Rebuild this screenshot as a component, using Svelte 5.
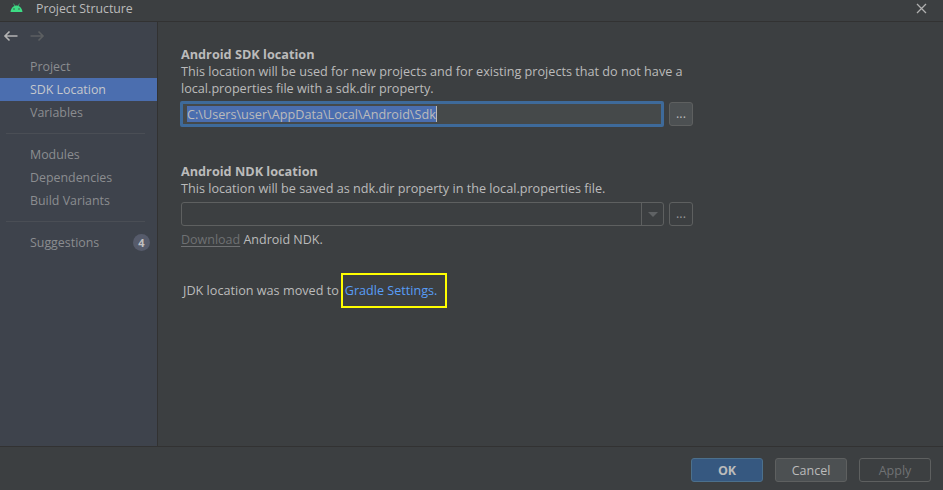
<script>
  const groups = [
    [{ t: 'Project' }, { t: 'SDK Location', on: true }, { t: 'Variables' }],
    [{ t: 'Modules' }, { t: 'Dependencies' }, { t: 'Build Variants' }],
    [{ t: 'Suggestions', badge: 4 }]
  ];
</script>

<div class="win">
  <header class="title">
    <svg class="droid" width="13" height="9" viewBox="0 0 13 9">
      <path fill="#3ddc84" d="M0.5 9C0.7 6 2.4 3.8 4.5 3L3.3 0.8 3.8 0.5 5 2.7C6 2.3 7 2.3 8 2.7L9.2 0.5 9.7 0.8 8.5 3C10.600 3.8 12.3 6 12.500 9Z"/>
      <circle cx="4" cy="6" r=".7" fill="#3c3f41"/><circle cx="9" cy="6" r=".7" fill="#3c3f41"/>
    </svg>
    <span>Project Structure</span>
    <svg class="close" width="11" height="11" viewBox="0 0 11 11"><path d="M1 1L10 10M10 1L1 10" stroke="#b0b0b0" stroke-width="1.3"/></svg>
  </header>

  <div class="body">
    <aside class="side">
      <div class="arrows">
        <svg width="16" height="12" viewBox="0 0 16 12"><path d="M14.5 6H2M6.5 1.5L2 6l4.5 4.5" fill="none" stroke="#b4b4b4" stroke-width="1.6"/></svg>
        <svg width="16" height="12" viewBox="0 0 16 12"><path d="M1.5 6H14M9.5 1.5L14 6l-4.500 4.500" fill="none" stroke="#5c5f61" stroke-width="1.600"/></svg>
      </div>
      {#each groups as g, i}
        {#if i > 0}<div class="sep"></div>{/if}
        <ul>
          {#each g as it}
            <li class:on={it.on}>
              <span>{it.t}</span>
              {#if it.badge}<b class="badge">{it.badge}</b>{/if}
            </li>
          {/each}
        </ul>
      {/each}
    </aside>

    <main class="main">
      <section class="sdk">
        <h2>Android SDK location</h2>
        <p>This location will be used for new projects and for existing projects that do not have a<br />local.properties file with a sdk.dir property.</p>
        <div class="row">
          <div class="input focus"><span class="sel">C:\Users\user\AppData\Local\Android\Sdk</span><i class="caret"></i></div>
          <div class="dots active">...</div>
        </div>
      </section>

      <section class="ndk">
        <h2>Android NDK location</h2>
        <p>This location will be saved as ndk.dir property in the local.properties file.</p>
        <div class="row">
          <div class="combo">
            <div class="drop"><i class="tri"></i></div>
          </div>
          <div class="dots">...</div>
        </div>
        <p class="dl"><u>Download</u> Android NDK.</p>
      </section>

      <p class="jdk">JDK location was moved to<span class="hl"><a href="#gradle">Gradle Settings.</a></span></p>
    </main>
  </div>

  <footer class="foot">
    <div class="btn ok">OK</div>
    <div class="btn cancel">Cancel</div>
    <div class="btn apply">Apply</div>
  </footer>
</div>

<style>
  :global(body) { margin: 0; background: #3c3f41; }
  .win {
    width: 943px; height: 490px; display: flex; flex-direction: column; overflow: hidden;
    background: #3c3f41; color: #bbbbbb;
    font: 12.5px/17px "Open Sans", "Noto Sans", sans-serif;
  }
  .title {
    flex: none; display: flex; align-items: center; padding: 0 16px 5px 10px;
    box-sizing: border-box; border-bottom: 1px solid #323232; height: 22px;
  }
  .title span { margin-left: 13px; font-size: 12.3px; color: #bbbbbb; }
  .droid { margin-top: -2px; }
  .close { margin-left: auto; }
  .body { flex: 1; display: flex; min-height: 0; }
  .side {
    width: 157px; flex: none; background: #3e434c; border-right: 1px solid #323232;
    box-sizing: content-box; color: #8b8d90; font-size: 12.4px;
  }
  .arrows { display: flex; align-items: center; gap: 10px; padding: 0 0 6px 3px; box-sizing: border-box; height: 33px; }
  ul { list-style: none; margin: 0; padding: 0; }
  li { height: 23px; display: flex; align-items: center; justify-content: space-between; padding: 0 7px 0 30px; }
  li.on { background: #4b6eaf; color: #c5c8cd; }
  .sep { height: 1px; background: #4a4e55; margin: 9px 12px 9px 6px; }
  .badge {
    width: 17px; height: 17px; border-radius: 50%; background: #565b6b; color: #c0c0c0;
    font-size: 11px; font-weight: 700; display: flex; align-items: center; justify-content: center;
  }
  .main { flex: 1; padding: 24px 0 0 23px; }
  h2 { margin: 0; font-size: 12.7px; line-height: 17px; font-weight: 700; color: #bbbbbb; }
  p { margin: 0; font-size: 12.65px; }
  .row { display: flex; align-items: center; }
  .sdk .row { margin: 4px 0 0 -1px; gap: 5px; }
  .input {
    width: 474px; height: 20px; background: #45494a; display: flex; align-items: center;
    border: 3px solid #3e6a9a; border-radius: 2px; padding-left: 4px; color: #bbbbbb; font-size: 12.65px;
  }
  .sel { background: #4b6eaf; line-height: 16px; color: #bbbbbb; }
  .caret { width: 1px; height: 16px; background: #bbbbbb; }
  .dots {
    width: 22px; height: 22px; border: 1px solid #5e6060; border-radius: 3px;
    display: flex; align-items: center; justify-content: center; color: #999999;
    line-height: 14px; flex: none;
  }
  .dots.active { background: #4c5052; border-color: #5e6060; color: #bbbbbb; }
  .ndk { margin-top: 36px; }
  .ndk .row { margin: 5px 0 0 0; gap: 5px; }
  .combo {
    width: 481px; height: 22px; border: 1px solid #5e6060; border-radius: 3px;
    display: flex; justify-content: flex-end;
  }
  .drop { width: 21px; border-left: 1px solid #5e6060; display: flex; align-items: center; justify-content: center; }
  .tri { width: 0; height: 0; border: 5px solid transparent; border-top: 5px solid #5f6264; border-bottom: 0; }
  .dl { margin-top: 5px; font-size: 12.5px; }
  .dl u { color: #6f7173; text-underline-offset: 2px; }
  .jdk { margin: 25px 0 0 2px; display: flex; align-items: center; white-space: pre; }
  .hl { border: 2px solid #ffff00; padding: 7px 8px 7px 2px; margin-left: 2px; font-size: 12.6px; }
  a { color: #589df6; text-decoration: none; }
  .foot {
    flex: none; border-top: 1px solid #323232; box-sizing: border-box; height: 44px;
    display: flex; align-items: flex-start; justify-content: flex-end; gap: 12px; padding: 11px 12px 0 0;
  }
  .btn {
    width: 72px; height: 24px; box-sizing: border-box; border-radius: 3px; border: 1px solid #5e6060;
    display: flex; align-items: center; justify-content: center;
  }
  .ok { background: #365880; border-color: #4c708c; font-weight: 700; color: #bbbbbb; }
  .cancel { background: #4c5052; color: #bbbbbb; }
  .apply { color: #707274; }
</style>
